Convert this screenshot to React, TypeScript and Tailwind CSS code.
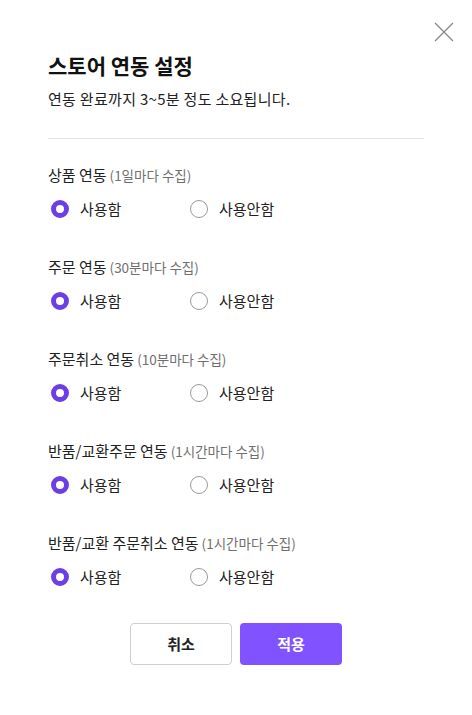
import React, { useState } from 'react';

const SECTIONS = [
  { title: '상품 연동', note: '(1일마다 수집)' },
  { title: '주문 연동', note: '(30분마다 수집)' },
  { title: '주문취소 연동', note: '(10분마다 수집)' },
  { title: '반품/교환주문 연동', note: '(1시간마다 수집)' },
  { title: '반품/교환 주문취소 연동', note: '(1시간마다 수집)' },
];

function Radio({ checked, label, onClick }: { checked: boolean; label: string; onClick: () => void }) {
  return (
    <button type="button" onClick={onClick} className="flex h-[22px] w-[139px] items-center gap-[11px] text-left">
      <span
        className={`box-border h-[18px] w-[18px] shrink-0 rounded-full ${
          checked ? 'border-[5px] border-[#6c3fe6]' : 'border border-[#9a9a9a]'
        }`}
      />
      <span className="text-[15px] leading-[22px] text-[#222]">{label}</span>
    </button>
  );
}

export default function App() {
  const [values, setValues] = useState<boolean[]>(SECTIONS.map(() => true));

  return (
    <div
      className="relative min-h-[715px] w-[472px] rounded-[4px] bg-white px-[48px] pt-[51px]"
      style={{ fontFamily: '"Noto Sans CJK KR", "Noto Sans", sans-serif' }}
    >
      <button type="button" className="absolute right-[18px] top-[22px] h-[20px] w-[20px]">
        <svg viewBox="0 0 20 20" width="20" height="20" fill="none" stroke="#8a8a8a" strokeWidth="1.3">
          <path d="M1 1L19 19M19 1L1 19" />
        </svg>
      </button>

      <h1 className="h-[28px] text-[21px] font-bold leading-[28px] text-[#111]">스토어 연동 설정</h1>
      <p className="mt-[9px] h-[22px] text-[15px] leading-[22px] tracking-[0.3px] text-[#222]">
        연동 완료까지 3~5분 정도 소요됩니다.
      </p>
      <div className="mt-[28px] h-px bg-[#e3e3e3]" />

      <div className="mt-[25px] flex flex-col gap-[36px]">
        {SECTIONS.map((s, i) => (
          <div key={s.title} className="flex flex-col gap-[12px]">
            <div className="flex h-[22px] items-baseline gap-[3px]">
              <span className="text-[15px] leading-[22px] text-[#222]">{s.title}</span>
              <span className="text-[13.5px] leading-[22px] text-[#6f6f6f]">{s.note}</span>
            </div>
            <div className="flex items-center pl-[3px]">
              <Radio
                checked={values[i]}
                label="사용함"
                onClick={() => setValues((v) => v.map((x, j) => (j === i ? true : x)))}
              />
              <Radio
                checked={!values[i]}
                label="사용안함"
                onClick={() => setValues((v) => v.map((x, j) => (j === i ? false : x)))}
              />
            </div>
          </div>
        ))}
      </div>

      <div className="mt-[35px] flex justify-center gap-[8px]">
        <button
          type="button"
          className="h-[42px] w-[102px] rounded-[4px] border border-[#cfcfcf] bg-white text-[15px] font-bold text-[#222]"
        >
          취소
        </button>
        <button type="button" className="h-[42px] w-[102px] rounded-[4px] bg-[#8152ff] text-[15px] font-bold text-white">
          적용
        </button>
      </div>
    </div>
  );
}
